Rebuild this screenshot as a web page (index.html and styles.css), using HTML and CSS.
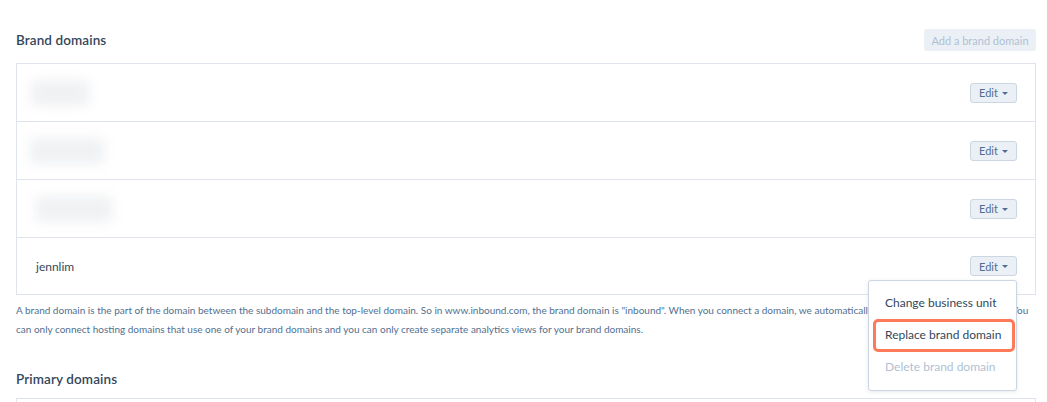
FILE: index.html
```html
<!DOCTYPE html>
<html lang="en">
<head>
<meta charset="utf-8">
<title>Brand domains</title>
<link rel="stylesheet" href="styles.css">
</head>
<body>
<div class="page">
  <div class="section-header">
    <h2 class="section-title">Brand domains</h2>
    <button class="btn-add" disabled>Add a brand domain</button>
  </div>

  <div class="domain-table">
    <div class="domain-row">
      <div class="blur-name blur-1"></div>
      <div class="edit-wrap"><button class="btn-edit">Edit<span class="caret"></span></button></div>
    </div>
    <div class="domain-row">
      <div class="blur-name blur-2"></div>
      <div class="edit-wrap"><button class="btn-edit">Edit<span class="caret"></span></button></div>
    </div>
    <div class="domain-row">
      <div class="blur-name blur-3"></div>
      <div class="edit-wrap"><button class="btn-edit">Edit<span class="caret"></span></button></div>
    </div>
    <div class="domain-row last">
      <div class="domain-name">jennlim</div>
      <div class="edit-wrap">
        <button class="btn-edit">Edit<span class="caret"></span></button>
        <ul class="dropdown">
          <li class="dd-item">Change business unit</li>
          <li class="dd-item highlighted">Replace brand domain<span class="annot"></span></li>
          <li class="dd-item disabled">Delete brand domain</li>
        </ul>
      </div>
    </div>
  </div>

  <p class="help">A brand domain is the part of the domain between the subdomain and the top-level domain. So in www.inbound.com, the brand domain is "inbound". When you connect a domain, we automatically recognize their brand domains. You<br>can only connect hosting domains that use one of your brand domains and you can only create separate analytics views for your brand domains.</p>

  <div class="section-header second">
    <h2 class="section-title">Primary domains</h2>
  </div>
  <div class="domain-table stub"></div>
</div>
</body>
</html>
```

FILE: styles.css
```css
* { box-sizing: border-box; }
html, body { margin: 0; padding: 0; background: #ffffff; }
body {
  font-family: Lato, "Open Sans", "Liberation Sans", sans-serif;
  color: #33475b;
  overflow: hidden;
}
.page {
  padding: 29px 11px 0 16px;
}
.section-header {
  display: flex;
  justify-content: space-between;
  align-items: center;
  height: 22px;
}
.section-title {
  margin: 0;
  font-size: 13.5px;
  font-weight: 600;
  color: #33475b;
  letter-spacing: 0.1px;
}
.btn-add {
  height: 22px;
  width: 112px;
  padding: 0;
  border: none;
  border-radius: 3px;
  background: #eaf0f6;
  color: #b0c1d4;
  font-family: inherit;
  font-size: 11px;
}
.domain-table {
  margin-top: 12px;
  border: 1px solid #dfe3eb;
}
.domain-row {
  height: 58px;
  display: flex;
  justify-content: space-between;
  align-items: center;
  padding: 0 18px 0 19px;
  border-bottom: 1px solid #dfe3eb;
}
.domain-row.last {
  height: 56px;
  border-bottom: none;
}
.blur-name {
  height: 26px;
  background: #f0f1f3;
  filter: blur(6px);
}
.blur-1 { width: 58px; margin-left: -5px; }
.blur-2 { width: 74px; margin-left: -6px; }
.blur-3 { width: 76px; margin-left: 0; }
.domain-name {
  font-size: 12px;
  color: #33475b;
  padding-top: 1px;
}
.edit-wrap {
  position: relative;
}
.btn-edit {
  display: flex;
  align-items: center;
  justify-content: center;
  gap: 4px;
  width: 47px;
  height: 20px;
  padding: 0;
  border: 1px solid #cbd6e2;
  border-radius: 3px;
  background: #eaf0f6;
  color: #506e91;
  font-family: inherit;
  font-size: 11px;
}
.caret {
  width: 0;
  height: 0;
  border-left: 3px solid transparent;
  border-right: 3px solid transparent;
  border-top: 3px solid #506e91;
  margin-top: 1px;
}
.dropdown {
  position: absolute;
  top: 24px;
  right: 0;
  width: 149px;
  margin: 0;
  padding: 6px 0 7px;
  list-style: none;
  background: #ffffff;
  border: 1px solid #cbd6e2;
  border-radius: 3px;
  box-shadow: 0 1px 4px rgba(45, 62, 80, 0.12);
  z-index: 5;
}
.dd-item {
  position: relative;
  height: 32px;
  line-height: 32px;
  padding-left: 16px;
  font-size: 12px;
  color: #33475b;
  white-space: nowrap;
}
.dd-item.disabled { color: #b0c1d4; }
.annot {
  position: absolute;
  left: 4px;
  right: 1px;
  top: 0;
  bottom: -1px;
  border: 3px solid #ff7a59;
  border-radius: 5px;
}
.help {
  margin: 6px 0 0;
  font-size: 10px;
  line-height: 19px;
  color: #516f90;
}
.section-header.second {
  margin-top: 29px;
}
.domain-table.stub {
  margin-top: 8px;
  height: 20px;
  border-bottom: none;
}
```
